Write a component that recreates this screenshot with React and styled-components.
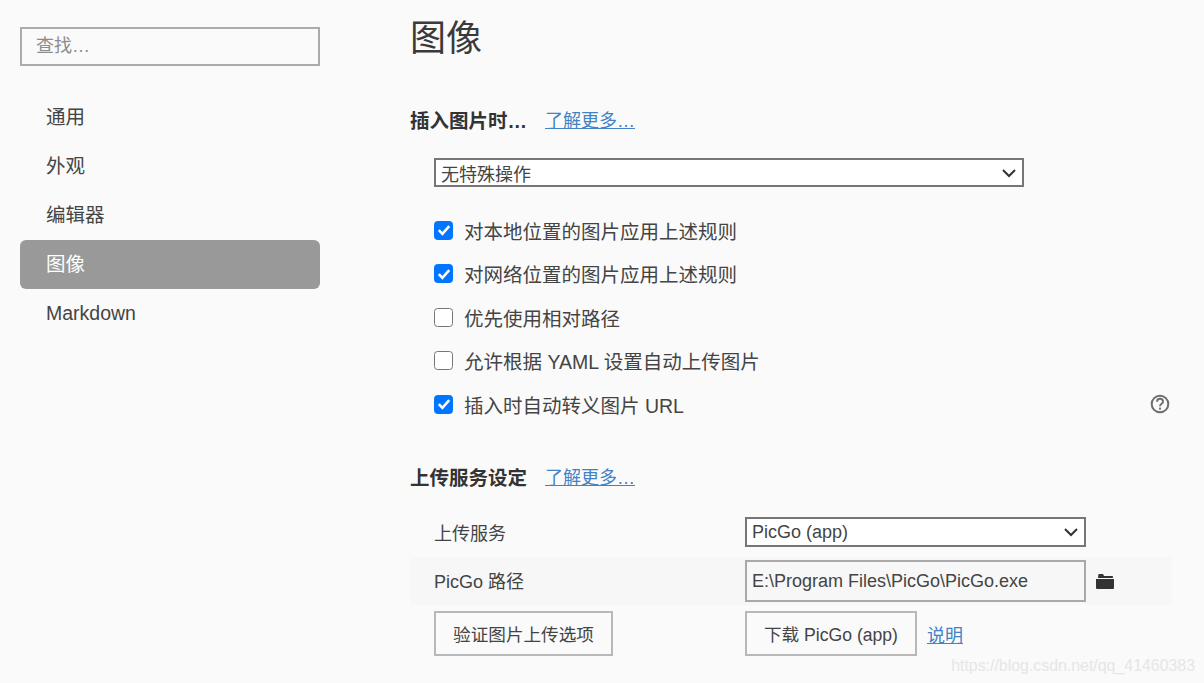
import styled, { createGlobalStyle } from "styled-components";

const GlobalStyle = createGlobalStyle`
  html, body {
    margin: 0;
    padding: 0;
    height: 100%;
    overflow: hidden;
    background: #fafafa;
  }
`;

const Page = styled.div`
  position: relative;
  width: 1204px;
  height: 683px;
  display: flex;
  overflow: hidden;
  background: #fafafa;
  color: #3f3f3f;
  font-family: "Liberation Sans", "Noto Sans CJK SC", sans-serif;
  font-size: 18px;
`;

const Sidebar = styled.aside`
  width: 300px;
  margin-left: 20px;
  padding-top: 27px;
  flex: none;
`;

const Search = styled.input`
  box-sizing: border-box;
  display: block;
  width: 300px;
  height: 39px;
  padding: 0 14px;
  border: 2px solid #ababab;
  background: transparent;
  font: inherit;
  outline: none;
  &::placeholder {
    color: #8c8c8c;
    opacity: 1;
  }
`;

const Nav = styled.nav`
  margin-top: 27px;
  display: flex;
  flex-direction: column;
`;

const NavItem = styled.div`
  height: 49px;
  line-height: 49px;
  padding-left: 26px;
  font-size: 19.5px;
  border-radius: 6px;
  color: ${(p) => (p.$active ? "#fff" : "#444")};
  background: ${(p) => (p.$active ? "#999" : "transparent")};
`;

const Main = styled.main`
  width: 762px;
  margin-left: 90px;
  flex: none;
`;

const Title = styled.h1`
  margin: 15px 0 0;
  font-size: 36px;
  line-height: 48px;
  font-weight: 400;
  color: #3a3a3a;
`;

const SectionHead = styled.div`
  display: flex;
  align-items: center;
  height: 26px;
  gap: 18px;
  margin-top: ${(p) => p.$top}px;
`;

const SectionTitle = styled.h2`
  margin: 0;
  font-size: 19.5px;
  font-weight: 700;
  color: #333;
`;

const Link = styled.a`
  color: #4183c4;
  font-size: 18px;
  text-decoration: underline;
  cursor: pointer;
`;

const SelectBox = styled.div`
  box-sizing: border-box;
  display: flex;
  align-items: center;
  justify-content: space-between;
  width: ${(p) => p.$width}px;
  height: ${(p) => p.$height}px;
  padding: 0 5px;
  border: 2px solid #767676;
  background: #fff;
  color: #444;
`;

const Chevron = styled.svg`
  width: 16px;
  height: 10px;
  flex: none;
`;

const Checks = styled.div`
  margin: ${(p) => p.$top}px 0 0 24px;
  display: flex;
  flex-direction: column;
`;

const CheckRow = styled.label`
  display: flex;
  align-items: center;
  gap: 11px;
  width: 738px;
  height: 43.5px;
  font-size: 19.5px;
  color: #444;
`;

const CheckBox = styled.span`
  box-sizing: border-box;
  width: 19px;
  height: 19px;
  flex: none;
  display: flex;
  align-items: center;
  justify-content: center;
  border-radius: 3.5px;
  border: 1px solid ${(p) => (p.$on ? "#0075ff" : "#767676")};
  background: ${(p) => (p.$on ? "#0075ff" : "#fff")};
`;

const CheckMark = styled.svg`
  width: 14px;
  height: 12px;
`;

const HelpIcon = styled.svg`
  width: 20px;
  height: 20px;
  margin-left: auto;
  margin-right: 2px;
`;

const Table = styled.div`
  margin-top: 18px;
  display: flex;
  flex-direction: column;
`;

const Row = styled.div`
  display: grid;
  grid-template-columns: 311px 1fr;
  align-items: center;
  height: ${(p) => p.$height}px;
  padding-left: 24px;
  background: ${(p) => (p.$shaded ? "#f7f7f7" : "transparent")};
`;

const Label = styled.div`
  color: #444;
  padding-bottom: ${(p) => (p.$raised ? 2 : 0)}px;
`;

const Cell = styled.div`
  display: flex;
  align-items: center;
`;

const PathInput = styled.div`
  box-sizing: border-box;
  width: 341px;
  height: 42px;
  line-height: 38px;
  padding-left: 5px;
  border: 2px solid #a9a9a9;
  color: #444;
`;

const FolderIcon = styled.svg`
  width: 18px;
  height: 15px;
  margin-left: 10px;
`;

const Button = styled.button`
  box-sizing: border-box;
  height: 45px;
  width: ${(p) => p.$width}px;
  padding: 0 0 1px;
  border: 2px solid #b8b8b8;
  background: transparent;
  color: #444;
  font: inherit;
  font-size: 17.6px;
`;

const HelpLink = styled(Link)`
  margin-left: 10px;
`;

const Watermark = styled.div`
  position: absolute;
  right: 9px;
  top: 655px;
  font-size: 15.9px;
  line-height: 22px;
  color: #e6e6e6;
`;

const checks = [
  { text: "对本地位置的图片应用上述规则", on: true },
  { text: "对网络位置的图片应用上述规则", on: true },
  { text: "优先使用相对路径", on: false },
  { text: "允许根据 YAML 设置自动上传图片", on: false },
  { text: "插入时自动转义图片 URL", on: true, help: true },
];

const navItems = ["通用", "外观", "编辑器", "图像", "Markdown"];

const ChevronIcon = () => (
  <Chevron viewBox="0 0 16 10">
    <path d="M2 2l6 6 6-6" fill="none" stroke="#333" strokeWidth="2" />
  </Chevron>
);

export default function App() {
  return (
    <Page>
      <GlobalStyle />
      <Sidebar>
        <Search placeholder="查找…" readOnly />
        <Nav>
          {navItems.map((item) => (
            <NavItem key={item} $active={item === "图像"}>
              {item}
            </NavItem>
          ))}
        </Nav>
      </Sidebar>
      <Main>
        <Title>图像</Title>
        <SectionHead $top={43}>
          <SectionTitle>插入图片时…</SectionTitle>
          <Link>了解更多…</Link>
        </SectionHead>
        <Checks $top={26}>
          <SelectBox $width={590} $height={29}>
            无特殊操作
            <ChevronIcon />
          </SelectBox>
        </Checks>
        <Checks $top={21.6}>
          {checks.map((c) => (
            <CheckRow key={c.text}>
              <CheckBox $on={c.on}>
                {c.on && (
                  <CheckMark viewBox="0 0 14 12">
                    <path d="M1.8 6.2l3.6 3.6 6.8-7.6" fill="none" stroke="#fff" strokeWidth="2.6" />
                  </CheckMark>
                )}
              </CheckBox>
              {c.text}
              {c.help && (
                <HelpIcon viewBox="0 0 20 20">
                  <circle cx="10" cy="10" r="8.3" fill="none" stroke="#6e6e6e" strokeWidth="2" />
                  <path d="M7 7.8a3 3 0 0 1 6 0c0 2-3 2-3 4.4" fill="none" stroke="#6e6e6e" strokeWidth="1.9" />
                  <rect x="9" y="13.6" width="2" height="2" fill="#6e6e6e" />
                </HelpIcon>
              )}
            </CheckRow>
          ))}
        </Checks>
        <SectionHead $top={37.4}>
          <SectionTitle>上传服务设定</SectionTitle>
          <Link>了解更多…</Link>
        </SectionHead>
        <Table>
          <Row $height={50}>
            <Label>上传服务</Label>
            <Cell>
              <SelectBox $width={341} $height={30}>
                PicGo (app)
                <ChevronIcon />
              </SelectBox>
            </Cell>
          </Row>
          <Row $height={48} $shaded>
            <Label $raised>PicGo 路径</Label>
            <Cell>
              <PathInput>E:\Program Files\PicGo\PicGo.exe</PathInput>
              <FolderIcon viewBox="0 0 18 15">
                <path d="M2.5 0h4.5l1 2h8a1 1 0 0 1 1 1v1H2z" fill="#333" />
                <path d="M0 5h18v9a1 1 0 0 1-1 1H1a1 1 0 0 1-1-1z" fill="#333" />
              </FolderIcon>
            </Cell>
          </Row>
          <Row $height={57}>
            <Cell>
              <Button $width={179}>验证图片上传选项</Button>
            </Cell>
            <Cell>
              <Button $width={172}>下载 PicGo (app)</Button>
              <HelpLink>说明</HelpLink>
            </Cell>
          </Row>
        </Table>
      </Main>
      <Watermark>https://blog.csdn.net/qq_41460383</Watermark>
    </Page>
  );
}
